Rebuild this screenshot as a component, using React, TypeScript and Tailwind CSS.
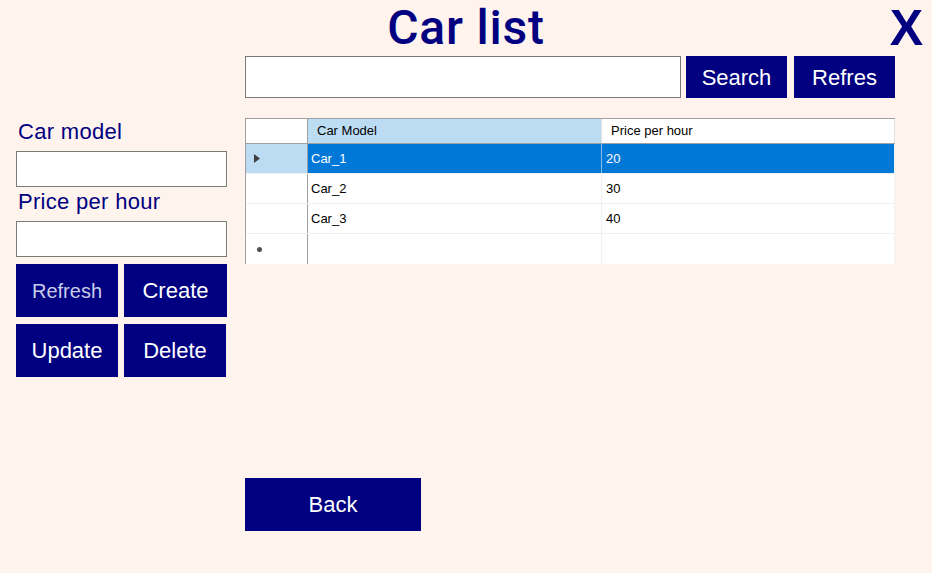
import React from "react";

const rows = [
  { model: "Car_1", price: "20" },
  { model: "Car_2", price: "30" },
  { model: "Car_3", price: "40" },
];

const btn =
  "bg-[#000080] text-white flex items-center justify-center font-['Liberation_Sans',Arial,sans-serif] text-[22px]";

export default function App() {
  return (
    <div className="w-[932px] h-[573px] bg-[#fff3ee] flex flex-col overflow-hidden">
      {/* title */}
      <div className="h-[56px] grid grid-cols-[1fr_auto_1fr]">
        <div />
        <h1 className="text-[#000080] text-[48px] leading-[56px] font-medium tracking-[0.8px] font-['Roboto',Arial,sans-serif]">
          Car list
        </h1>
        <div className="flex justify-end pr-[9px]">
          <span className="text-[#000080] text-[50px] leading-[56px] font-bold font-['Liberation_Sans',Arial,sans-serif]">
            X
          </span>
        </div>
      </div>

      <div className="flex">
        {/* left form */}
        <div className="w-[245px] pl-4 pt-[64px] flex flex-col font-['Liberation_Sans',Arial,sans-serif]">
          <label className="text-[#000080] text-[22px] leading-[24px] pl-[2px] tracking-[0.3px]">Car model</label>
          <input className="mt-[7px] w-[211px] h-[36px] bg-white border border-[#7a7a7a] outline-none" />
          <label className="mt-[3px] text-[#000080] text-[22px] leading-[24px] pl-[2px] tracking-[0.3px]">Price per hour</label>
          <input className="mt-[7px] w-[211px] h-[36px] bg-white border border-[#7a7a7a] outline-none" />
          <div className="mt-[7px] grid grid-cols-[102px_103px] gap-x-[6px] gap-y-[7px]">
            <button className={`${btn} h-[53px] !text-[20px] !text-[#c8cce8]`}>Refresh</button>
            <button className={`${btn} h-[53px]`}>Create</button>
            <button className={`${btn} h-[53px]`}>Update</button>
            <button className={`${btn} h-[53px] w-[102px]`}>Delete</button>
          </div>
        </div>

        {/* right side */}
        <div className="w-[650px] flex flex-col">
          <div className="flex h-[42px]">
            <input className="w-[436px] h-[42px] bg-white border border-[#7a7a7a] outline-none" />
            <button className={`${btn} ml-[5px] w-[101px] h-[42px]`}>Search</button>
            <button className={`${btn} ml-[7px] w-[101px] h-[42px] items-start pt-[5px]`}>Refres</button>
          </div>

          {/* data grid */}
          <div className="mt-[20px] w-[650px] border-t border-l border-[#a0a0a0] font-['Liberation_Sans',Arial,sans-serif] text-[13px] text-black">
            <div className="flex h-[25px] border-b border-[#a0a0a0]">
              <div className="w-[62px] bg-white border-r border-[#a0a0a0]" />
              <div className="w-[294px] bg-[#bcdcf4] pl-[9px] flex items-center border-r border-[#e0e0e0]">Car Model</div>
              <div className="flex-1 bg-white pl-[9px] flex items-center border-r border-[#e0e0e0]">Price per hour</div>
            </div>
            {rows.map((r, i) => {
              const sel = i === 0;
              return (
                <div key={r.model} className="flex h-[30px] border-b border-[#f0f0f0]">
                  <div className={`w-[62px] border-r border-[#a0a0a0] flex items-center pl-[8px] ${sel ? "bg-[#bcdcf4]" : "bg-white"}`}>
                    {sel && (
                      <svg width="6" height="9" viewBox="0 0 6 9">
                        <path d="M0 0 L6 4.5 L0 9 Z" fill="#404040" />
                      </svg>
                    )}
                  </div>
                  <div className={`w-[294px] pl-[3px] flex items-center border-r ${sel ? "bg-[#0078d7] text-white border-[#8fbbe8]" : "bg-white border-[#f0f0f0]"}`}>
                    {r.model}
                  </div>
                  <div className={`flex-1 pl-[4px] flex items-center border-r border-[#f0f0f0] ${sel ? "bg-[#0078d7] text-white" : "bg-white"}`}>
                    {r.price}
                  </div>
                </div>
              );
            })}
            <div className="flex h-[30px]">
              <div className="w-[62px] bg-white border-r border-[#a0a0a0] flex items-center pl-[10px]">
                <svg width="7" height="7" viewBox="0 0 7 7">
                  <circle cx="3.5" cy="3.5" r="2.5" fill="#505050" />
                </svg>
              </div>
              <div className="w-[294px] bg-white border-r border-[#f0f0f0]" />
              <div className="flex-1 bg-white border-r border-[#f0f0f0]" />
            </div>
          </div>

          <button className={`${btn} mt-[214px] w-[176px] h-[53px]`}>Back</button>
        </div>
      </div>
    </div>
  );
}
